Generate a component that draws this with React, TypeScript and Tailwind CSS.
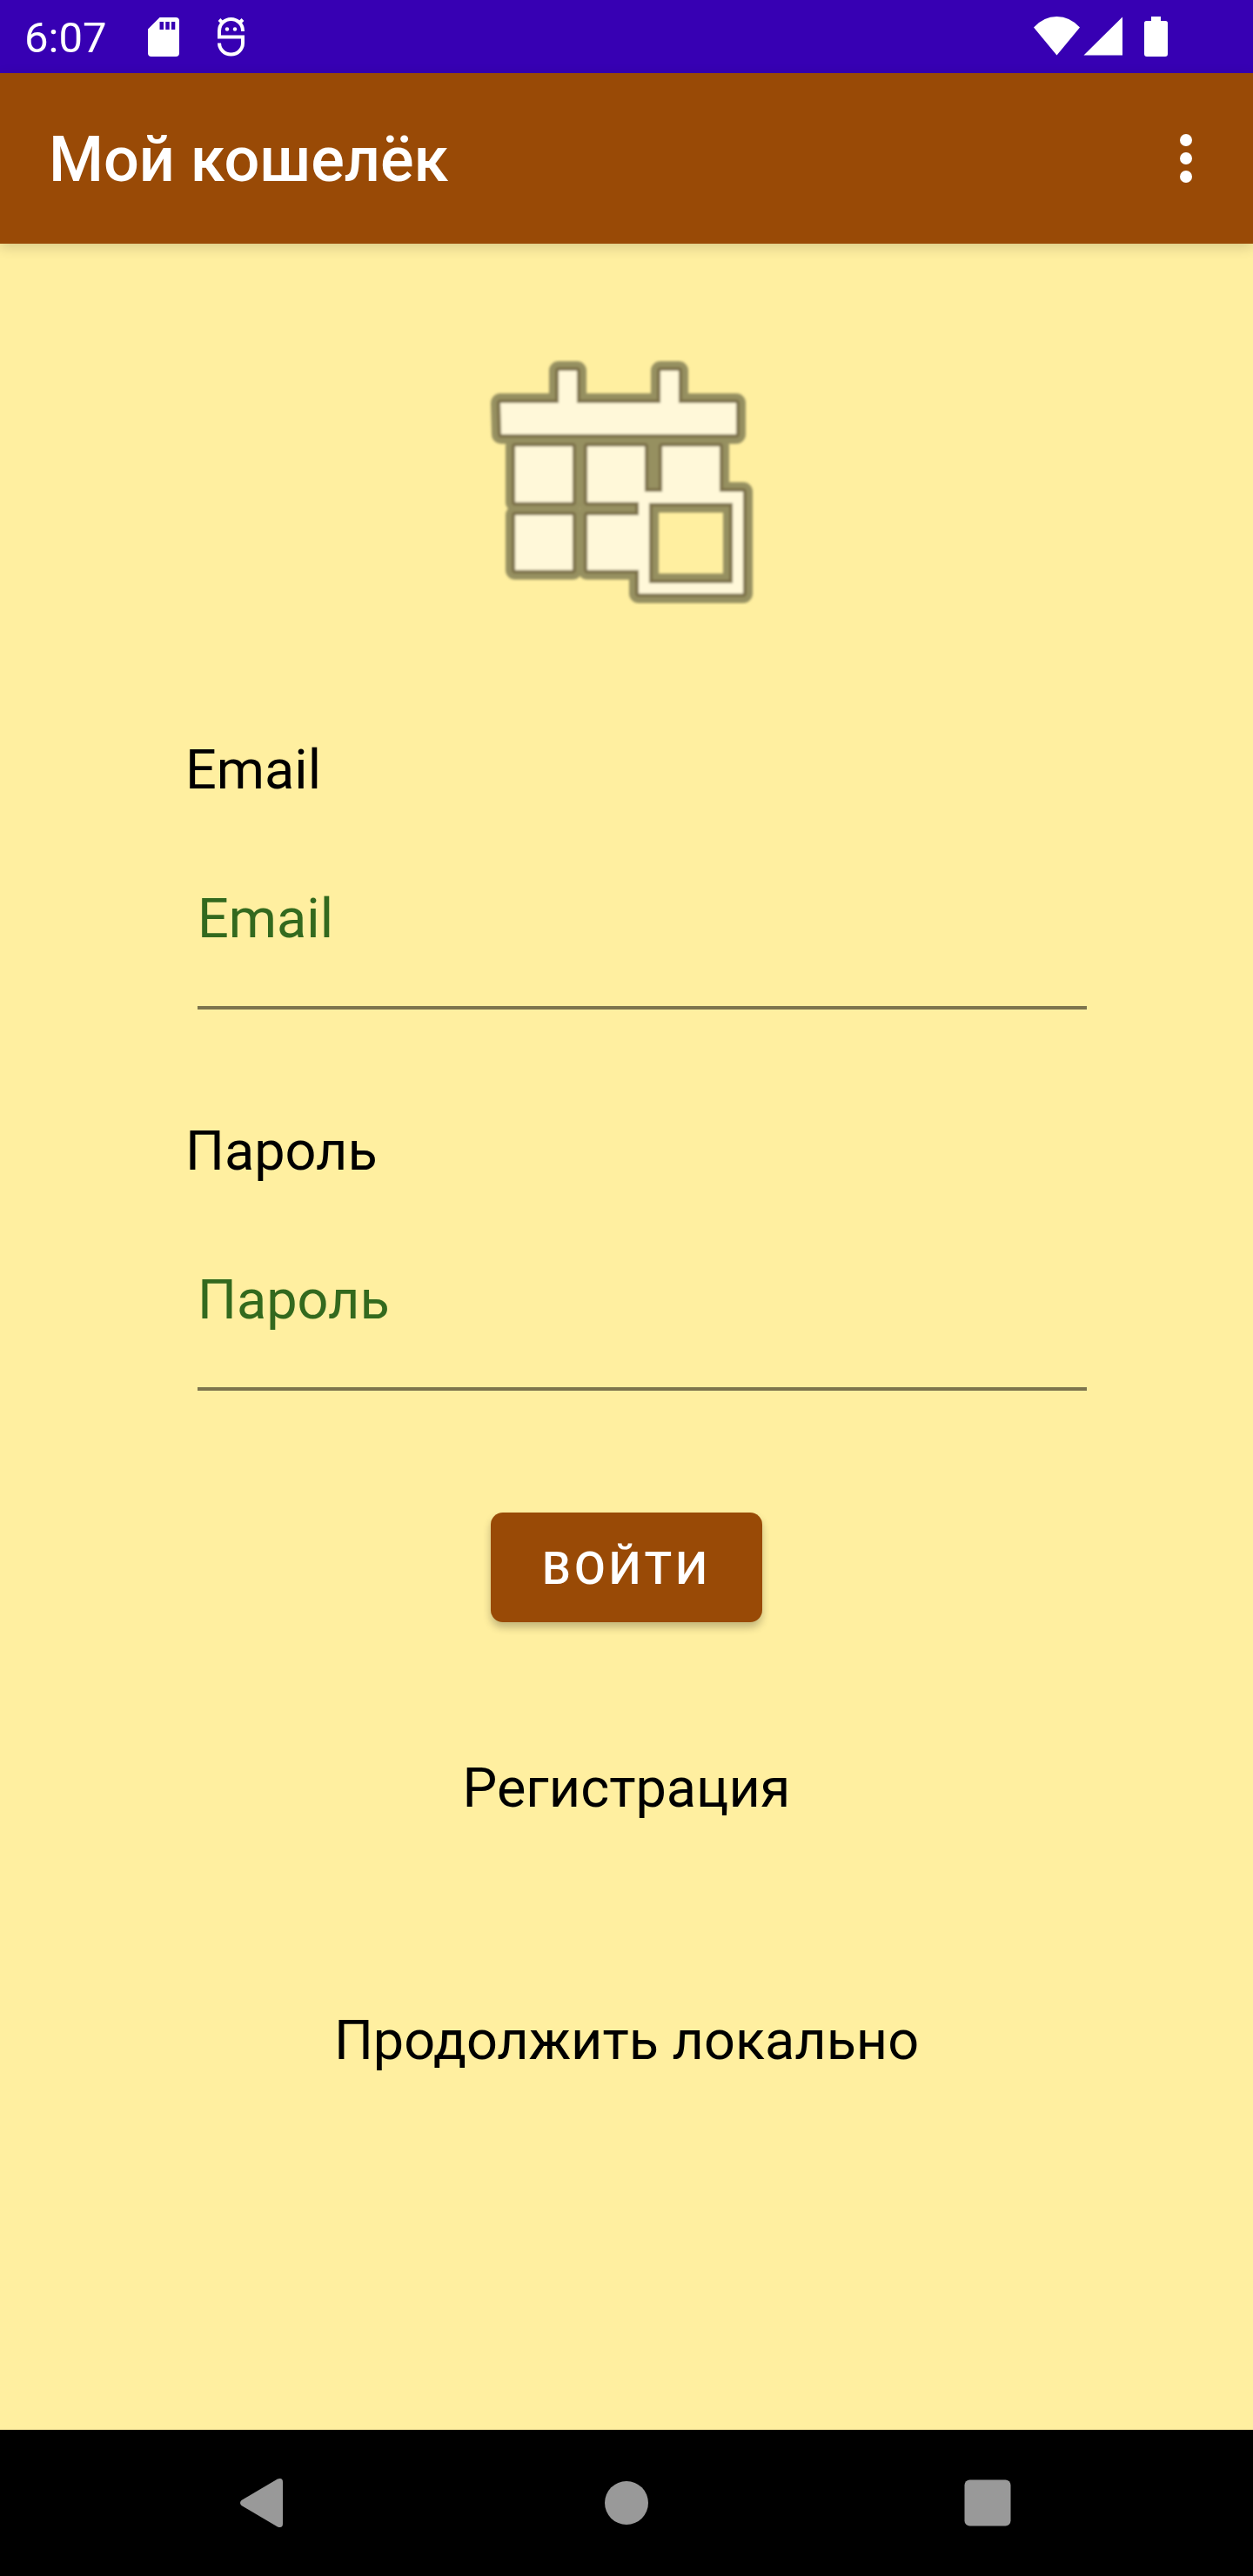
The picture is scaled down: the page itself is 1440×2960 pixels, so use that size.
import React from "react";

function SdCardIcon() {
  return (
    <svg className="h-[45px] w-[36px]" viewBox="0 0 36 45" aria-hidden="true">
      <path
        fill="#fff"
        fillRule="evenodd"
        d="M13.500 0H32Q36 0 36 4V41Q36 45 32 45H4Q0 45 0 41V13.500ZM13.500 5V14H18V5ZM20.300 5V14H24.700V5ZM27 5V14H31.300V5Z"
      />
    </svg>
  );
}

function DebugIcon() {
  return (
    <svg className="h-[45px] w-[31px]" viewBox="0 0 31 45" fill="none" stroke="#fff" strokeWidth="4" aria-hidden="true">
      <path d="M29 16V15.500A13.500 13.500 0 0 0 2 15.500V22.500H29V29.500A13.500 13 0 0 1 2 29.500" />
      <path d="M2 2.500L7 7.500M29 2.500L24 7.500" strokeWidth="4" />
      <circle cx="11" cy="13.500" r="2.200" fill="#fff" stroke="none" />
      <circle cx="20" cy="13.500" r="2.200" fill="#fff" stroke="none" />
    </svg>
  );
}

function StatusBar() {
  return (
    <div className="flex h-[84px] items-center justify-between bg-[#3700b3] pr-[98px] pl-7 text-white">
      <div className="flex items-center">
        <span className="pt-1 text-[49px] leading-[58px]">6:07</span>
        <span className="ml-12"><SdCardIcon /></span>
        <span className="ml-11"><DebugIcon /></span>
      </div>
      <svg className="h-[46px] w-[154px]" viewBox="0 0 154 46" fill="#fff" aria-hidden="true">
        <path d="M0 12.500Q11.500 0 26.500 0T53 12.500L26.500 44.500Z" />
        <path d="M57.500 44.500L102 0.500V44.500Z" />
        <path d="M135 0H146V5H151.500Q154 5 154 7.500V43Q154 46 151 46H130Q127 46 127 43V7.500Q127 5 129.500 5H135Z" />
      </svg>
    </div>
  );
}

function AppBar() {
  return (
    <header className="z-10 flex h-[196px] items-center justify-between bg-[#994a06] pr-[70px] pl-14 text-white shadow-[0_4px_14px_rgba(0,0,0,0.16)]">
      <h1 className="pt-1 text-[72px] leading-[84px] font-medium">Мой кошелёк</h1>
      <button type="button" aria-label="Меню">
        <svg className="h-14 w-3.5" viewBox="0 0 14 56" fill="#fff" aria-hidden="true">
          <circle cx="7" cy="7" r="7" />
          <circle cx="7" cy="28" r="7" />
          <circle cx="7" cy="49" r="7" />
        </svg>
      </button>
    </header>
  );
}

const LOGO_PATH =
  "M35 73H102V36H123V73H219V36H240V73H306V109H36ZM52 123H118V187H52ZM135 123H201V175H221V123H287V175H314V292H194V265H135V202H194V187H135ZM52 202H118V265H52ZM206 188V280H302V188Z";

function Logo() {
  return (
    <svg className="h-[330px] w-[340px]" viewBox="10 0 340 330" aria-hidden="true">
      <defs>
        <filter id="soft" x="-5%" y="-5%" width="110%" height="110%">
          <feGaussianBlur stdDeviation="1.400" />
        </filter>
      </defs>
      <g filter="url(#soft)">
        <path d={LOGO_PATH} fill="none" stroke="#969061" strokeWidth="22" strokeLinejoin="round" />
        <path d={LOGO_PATH} fill="none" stroke="#7d7149" strokeWidth="8" strokeLinejoin="round" />
        <path d={LOGO_PATH} fill="#fff8d9" fillRule="evenodd" />
      </g>
    </svg>
  );
}

type FieldProps = { id: string; label: string; type: string };

function Field({ id, label, type }: FieldProps) {
  return (
    <div className="flex w-full flex-col">
      <label htmlFor={id} className="text-[63px] leading-[74px]">
        {label}
      </label>
      <input
        id={id}
        type={type}
        placeholder={label}
        className="mx-3.5 mt-[75px] h-[163px] border-b-4 border-[#7d744d] bg-transparent pb-[43px] text-[63px] outline-none placeholder:text-[#33691e] placeholder:opacity-100"
      />
    </div>
  );
}

function NavBar() {
  return (
    <nav className="flex h-[168px] items-center justify-between bg-black pr-[272px] pl-[270px]">
      <button type="button" aria-label="Назад">
        <svg className="h-[60px] w-[60px]" viewBox="0 0 60 60" fill="#999" aria-hidden="true">
          <path d="M7.500 27L49 2.500Q55 0.500 55 6V54Q55 59.500 49 57.500L7.500 33Q4.500 30 7.500 27Z" />
        </svg>
      </button>
      <button type="button" aria-label="Домой">
        <svg className="h-[60px] w-[60px]" viewBox="0 0 60 60" fill="#999" aria-hidden="true">
          <circle cx="31" cy="30" r="25" />
        </svg>
      </button>
      <button type="button" aria-label="Недавние">
        <svg className="h-[60px] w-[60px]" viewBox="0 0 60 60" fill="#999" aria-hidden="true">
          <rect x="0.500" y="3.500" width="53" height="53" rx="6" />
        </svg>
      </button>
    </nav>
  );
}

export default function App() {
  return (
    <div className="flex min-h-screen flex-col bg-[#ffefa0] font-['Roboto',sans-serif] text-black">
      <StatusBar />
      <AppBar />
      <main className="flex flex-1 flex-col items-center pt-[110px]">
        <Logo />
        <form
          className="flex w-full flex-col items-center pt-[128px]"
          onSubmit={(e) => e.preventDefault()}
        >
          <div className="flex w-full flex-col gap-[126px] pr-[177px] pl-[213px]">
            <Field id="email" label="Email" type="email" />
            <Field id="password" label="Пароль" type="password" />
          </div>
          <button
            type="submit"
            className="mt-[140px] h-[126px] w-[312px] rounded-[14px] bg-[#994a06] pt-1 text-[52px] leading-[62px] font-medium tracking-[4px] text-white uppercase shadow-[0_6px_10px_rgba(0,0,0,0.24)]"
          >
            Войти
          </button>
        </form>
        <a href="#register" className="mt-[154px] text-[63px] leading-[74px]">
          Регистрация
        </a>
        <a href="#local" className="mt-[216px] text-[63px] leading-[74px]">
          Продолжить локально
        </a>
      </main>
      <NavBar />
    </div>
  );
}
